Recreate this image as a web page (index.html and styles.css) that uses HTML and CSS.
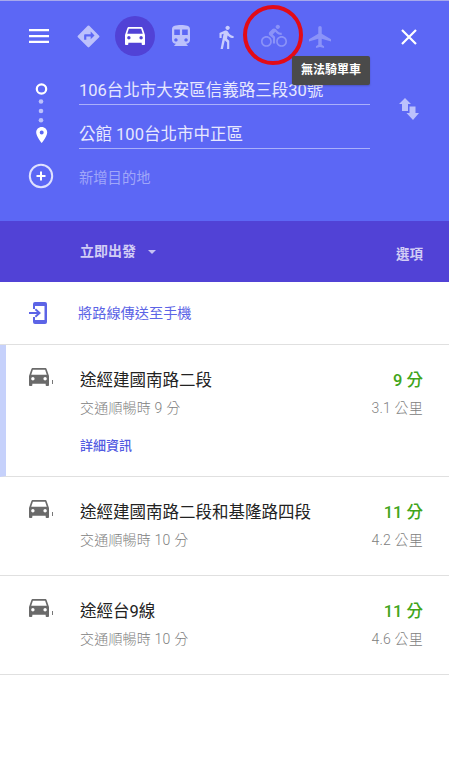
FILE: index.html
```html
<!DOCTYPE html>
<html lang="zh-Hant">
<head>
<meta charset="utf-8">
<title>路線規劃</title>
<link rel="stylesheet" href="styles.css">
</head>
<body>
<svg class="defs" width="0" height="0">
  <symbol id="car" viewBox="3 5 18 16" preserveAspectRatio="none"><path d="M18.92 6.01C18.72 5.42 18.16 5 17.5 5h-11c-.66 0-1.21.42-1.42 1.01L3 12v8c0 .55.45 1 1 1h1c.55 0 1-.45 1-1v-1h12v1c0 .55.45 1 1 1h1c.55 0 1-.45 1-1v-8l-2.08-5.99zM6.5 16c-.83 0-1.5-.67-1.5-1.500S5.670 13 6.500 13s1.500.67 1.500 1.500S7.330 16 6.500 16zm11 0c-.83 0-1.500-.67-1.500-1.500s.67-1.500 1.500-1.500 1.500.67 1.500 1.500-.67 1.500-1.500 1.500zM5 11l1.500-4.500h11L19 11H5z"/></symbol>
</svg>
<header class="search">
  <nav class="modes">
    <button class="menu" aria-label="選單"><svg width="20" height="14" viewBox="0 0 20 14"><path d="M0 0h20v2.300H0zM0 5.900h20v2.300H0zM0 11.700h20V14H0z"/></svg></button>
    <div class="mode-list">
      <span class="mode"><svg width="23" height="23" viewBox="1.500 1.500 21 21"><path d="M21.710 11.290l-9-9a.996.996 0 0 0-1.410 0l-9 9a.996.996 0 0 0 0 1.410l9 9c.39.39 1.020.39 1.410 0l9-9a.996.996 0 0 0 0-1.410zM14 14.500V12h-4v3H8v-4c0-.55.45-1 1-1h5V7.500l3.500 3.500-3.500 3.500z"/></svg></span>
      <span class="mode active"><svg width="20" height="18"><use href="#car"/></svg></span>
      <span class="mode train"><svg width="18" height="21" viewBox="4 2 16 19" preserveAspectRatio="none"><path d="M12 2c-4.420 0-8 .5-8 4v9.500C4 17.430 5.570 19 7.500 19L6 20.500v.5h12v-.5L16.500 19c1.930 0 3.500-1.570 3.500-3.500V6c0-3.500-3.580-4-8-4zM7.500 17c-.83 0-1.500-.67-1.500-1.500S6.670 14 7.500 14s1.500.67 1.500 1.500S8.330 17 7.500 17zm3.500-6H6V6h5v5zm5.500 6c-.83 0-1.500-.67-1.500-1.500s.67-1.500 1.500-1.500 1.500.67 1.500 1.500-.67 1.500-1.500 1.500zm1.500-6h-5V6h5v5z"/></svg></span>
      <span class="mode walk"><svg width="26" height="26" viewBox="0 0 24 24"><path d="M13.500 5.500c1.100 0 2-.9 2-2s-.9-2-2-2-2 .9-2 2 .9 2 2 2zM9.800 8.900L7 23h2.100l1.800-8 2.100 2v6h2v-7.500l-2.100-2 .6-3C14.800 12 16.800 13 19 13v-2c-1.900 0-3.500-1-4.300-2.400l-1-1.600c-.4-.6-1-1-1.700-1-.3 0-.5.1-.8.1L6 8.300V13h2V9.600l1.800-.7"/></svg></span>
      <span class="mode disabled"><svg width="26" height="26" viewBox="0 0 24 24"><path d="M15.500 5.500c1.100 0 2-.9 2-2s-.9-2-2-2-2 .9-2 2 .9 2 2 2zM5 12c-2.800 0-5 2.200-5 5s2.200 5 5 5 5-2.200 5-5-2.200-5-5-5zm0 8.500c-1.900 0-3.500-1.600-3.500-3.500s1.600-3.500 3.500-3.500 3.500 1.600 3.500 3.500-1.600 3.500-3.500 3.500zm5.800-10l2.400-2.400.8.8c1.300 1.300 3 2.100 5.100 2.100V9c-1.500 0-2.700-.6-3.600-1.500l-1.900-1.900c-.5-.4-1-.6-1.600-.6s-1.100.2-1.400.6L7.800 8.400c-.4.4-.6.9-.6 1.400 0 .6.2 1.100.6 1.400L11 14v5h2v-6.200l-2.200-2.300zM19 12c-2.800 0-5 2.200-5 5s2.200 5 5 5 5-2.200 5-5-2.200-5-5-5zm0 8.500c-1.900 0-3.500-1.600-3.500-3.500s1.600-3.500 3.500-3.500 3.500 1.600 3.500 3.500-1.600 3.500-3.500 3.500z"/></svg></span>
      <span class="mode disabled plane"><svg width="22" height="22" viewBox="2 2 19 20" preserveAspectRatio="none"><path d="M21 16v-2l-8-5V3.500c0-.83-.67-1.500-1.500-1.500S10 2.670 10 3.500V9l-8 5v2l8-2.500V19l-2 1.500V22l3.500-1 3.500 1v-1.500L13 19v-5.500l8 2.500z"/></svg></span>
    </div>
    <button class="close" aria-label="關閉"><svg width="16" height="16" viewBox="0 0 16 16"><path d="M1 1l14 14M15 1L1 15"/></svg></button>
    <svg class="ring" width="62" height="62" viewBox="0 0 62 62"><circle cx="31" cy="31" r="28"/></svg>
    <span class="tooltip">無法騎單車</span>
  </nav>
  <div class="waypoints">
    <svg class="track" width="26" height="120" viewBox="0 0 26 120">
      <circle class="stroke" cx="13.500" cy="13" r="4.700"/>
      <g class="dots"><circle cx="13" cy="25.500" r="2.300"/><circle cx="13" cy="35" r="2.300"/><circle cx="13" cy="44.300" r="2.300"/></g>
      <path fill-rule="evenodd" d="M13.700 51c-3.200 0-5.500 2.400-5.500 5.500 0 4 5.500 10.500 5.500 10.500s5.500-6.500 5.500-10.500c0-3.100-2.300-5.500-5.500-5.500zm0 3.600a2 2 0 1 1 0 4 2 2 0 0 1 0-4z"/>
      <circle class="stroke add" cx="13" cy="100" r="11.200"/>
      <path d="M12 95.500h2v3.500h3.500v2H14v3.500h-2V101H8.500v-2H12z"/>
    </svg>
    <div class="fields">
      <div class="field">106台北市大安區信義路三段30號</div>
      <div class="field second">公館 100台北市中正區</div>
      <div class="field add-stop">新增目的地</div>
    </div>
    <svg class="swap" width="20" height="22" viewBox="0 0 20 22"><path d="M6 0l6 6H9v7H3V6H0zM10.500 8.500h6V15h3.500l-6 7-6.500-7h3z"/></svg>
  </div>
</header>
<section class="options">
  <span class="depart">立即出發<i class="caret"></i></span>
  <span class="more">選項</span>
</section>
<main>
  <div class="send">
    <svg width="19" height="22" viewBox="0 0 19 22"><path d="M6 0h10a2 2 0 0 1 2 2v18a2 2 0 0 1-2 2H6a2 2 0 0 1-2-2v-5h2v3h9.500V4H6v3H4V2a2 2 0 0 1 2-2zM7 6.500l5 4.500-5 4.500-1.300-1.400 2.300-2.100H0v-2h8L5.700 7.900z"/></svg>
    <span>將路線傳送至手機</span>
  </div>
  <article class="route selected">
    <div class="vehicle"><svg width="20" height="18"><use href="#car"/></svg><i></i></div>
    <div class="info"><h2>途經建國南路二段</h2><p>交通順暢時 9 分</p><a>詳細資訊</a></div>
    <div class="cost"><strong>9 分</strong><p>3.1 公里</p></div>
  </article>
  <article class="route">
    <div class="vehicle"><svg width="20" height="18"><use href="#car"/></svg><i></i></div>
    <div class="info"><h2>途經建國南路二段和基隆路四段</h2><p>交通順暢時 10 分</p></div>
    <div class="cost"><strong>11 分</strong><p>4.2 公里</p></div>
  </article>
  <article class="route">
    <div class="vehicle"><svg width="20" height="18"><use href="#car"/></svg><i></i></div>
    <div class="info"><h2>途經台9線</h2><p>交通順暢時 10 分</p></div>
    <div class="cost"><strong>11 分</strong><p>4.6 公里</p></div>
  </article>
</main>
</body>
</html>
```
FILE: styles.css
```css
* { box-sizing: border-box; }
body { margin: 0; width: 449px; min-height: 768px; background: #fff; font-family: Roboto, "Noto Sans CJK TC", sans-serif; overflow: hidden; }
svg { display: block; flex: none; }
.defs { position: absolute; }
button { border: 0; padding: 0; background: none; }
h2, p { margin: 0; font-weight: 400; }

.search { height: 221px; background: #5c67f5; border-top: 1px solid #a7a9ec; }
.modes { position: relative; display: flex; align-items: center; height: 70px; padding: 0 32px 0 29px; }
.menu svg, .close svg { fill: #fff; }
.mode-list { display: grid; grid-template-columns: repeat(6, 46.300px); margin-left: 16.500px; }
.mode { display: flex; align-items: center; justify-content: center; justify-self: center; width: 40px; height: 40px; fill: #bcc1fc; }
.mode.active { background: #5142d6; border-radius: 50%; fill: #fff; }
.mode.train { padding-bottom: 1px; }
.mode.walk { padding: 1px 3px 0 0; fill: #c9cdfd; }
.mode.disabled { fill: #8b93f8; }
.mode.plane { padding-top: 2px; }
.close { margin-left: auto; padding-top: 2px; }
.close svg { stroke: #fff; stroke-width: 2.200; }
.ring { position: absolute; left: 242px; top: 3px; fill: none; stroke: #e30b17; stroke-width: 4; }
.tooltip { position: absolute; left: 292px; top: 55px; width: 78px; height: 29px; background: #4a4a4a; border-radius: 2px; color: #fff; font-size: 12px; font-weight: 700; line-height: 28px; text-align: center; box-shadow: 0 1px 2px rgba(0,0,0,.2); z-index: 1; }

.waypoints { display: flex; align-items: flex-start; padding: 5px 30px 0 28px; }
.track { fill: #fff; }
.track .stroke { fill: none; stroke: #fff; stroke-width: 2.200; }
.track .add { stroke: #dfe1fe; stroke-width: 2; }
.track .dots { fill: #bcc1fc; }
.fields { width: 291px; margin-left: 25px; }
.field { height: 29px; border-bottom: 1px solid #aab0fa; color: #e7e8fe; font-size: 16.500px; line-height: 29px; white-space: nowrap; }
.second { margin-top: 15px; line-height: 30px; }
.add-stop { margin-top: 15px; border: 0; color: #a0a6f9; font-size: 14.300px; line-height: 28px; }
.swap { margin: 22px 0 0 29px; fill: #bcc1fc; }

.options { display: flex; justify-content: space-between; align-items: center; height: 61px; padding: 0 26px 0 80px; background: #5142d6; color: #d2cdf5; font-size: 14px; font-weight: 600; }
.depart { display: flex; align-items: center; padding-bottom: 4px; }
.caret { margin: 5px 0 0 12px; border: 4.500px solid transparent; border-top-color: #c6c1f3; border-bottom: 0; }
.more { padding-top: 2px; font-size: 13.500px; font-weight: 700; }

.send { display: flex; align-items: center; height: 63px; padding-left: 29px; border-bottom: 1px solid #e0e0e0; color: #5c64e6; fill: #5c64e6; font-size: 14.200px; }
.send span { margin: 0 0 2px 30px; }
.route { display: flex; height: 99px; padding: 22px 26px 0 29px; border-bottom: 1px solid #e0e0e0; }
.selected { height: 132px; padding-left: 23px; border-left: 6px solid #c6d1fb; }
.vehicle { display: flex; width: 51px; padding-top: 1px; fill: #6a6a6a; }
.vehicle i { width: 1px; height: 4px; margin: 12px 0 0 3px; background: #777; }
.info { flex: 1; }
h2 { color: #222; font-size: 16.500px; line-height: 28px; }
p { color: #808080; font-size: 14px; font-weight: 300; line-height: 26px; letter-spacing: .2px; }
.info a { display: block; margin-top: 11px; color: #525be2; font-size: 13px; font-weight: 500; line-height: 28px; }
.cost { text-align: right; }
.cost strong { display: block; color: #41a51a; font-size: 16.500px; font-weight: 500; line-height: 28px; }
```
